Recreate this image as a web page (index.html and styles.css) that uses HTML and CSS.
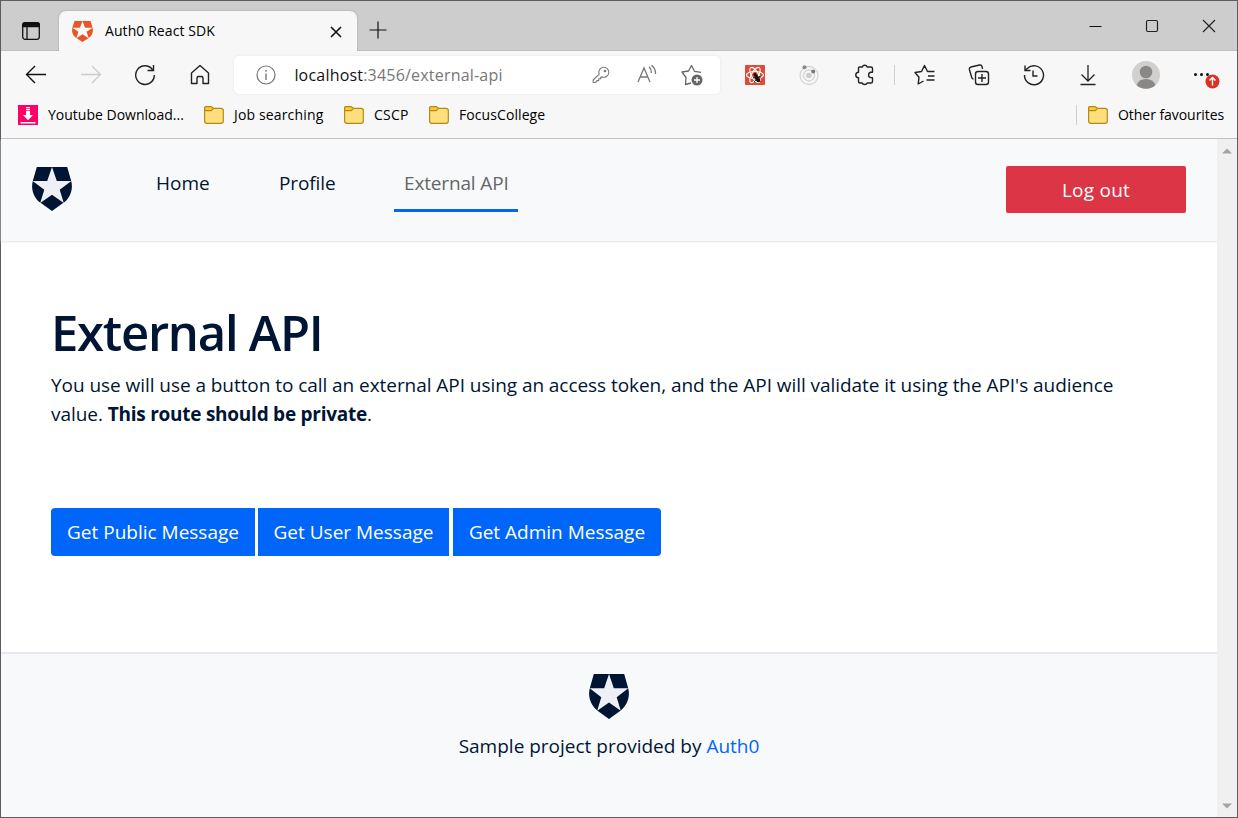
FILE: index.html
```html
<!DOCTYPE html>
<html lang="en">
<head>
<meta charset="utf-8">
<title>Auth0 React SDK</title>
<link rel="stylesheet" href="styles.css">
</head>
<body>
<svg class="defs" width="0" height="0">
  <symbol id="shield" viewBox="0 0 40 45">
    <path class="shield-body" d="M4.8 0H35.2L39 13.5C41.6 22 38.4 31.5 31.8 36.4L20 45 8.2 36.4C1.600 31.500-1.600 22 1 13.500Z"/>
    <path class="shield-star" d="M20 0 24.800 14.300H39.300L27.700 23.300 31.800 36.800 20 28.500 8.200 36.800 12.300 23.300.700 14.300H15.200Z"/>
  </symbol>
  <symbol id="folder" viewBox="0 0 22 20">
    <path d="M1.600 4.500V16q0 2.300 2.300 2.300H18q2.300 0 2.300-2.300V5.500Q20.300 3.300 18 3.300H10" fill="#ffde7c" stroke="#b58a12" stroke-width="1.200"/>
    <path d="M2.800 1.600H8.300L10.400 3.300 8.300 5.600H2.800Q1.600 5.600 1.600 4.500V2.800Q1.600 1.600 2.800 1.600Z" fill="#fcc934" stroke="#b58a12" stroke-width="1.200"/>
  </symbol>
</svg>
<div class="window">
  <div class="tabstrip">
    <svg class="tab-menu" width="20" height="20" viewBox="0 0 20 20" fill="none" stroke="#111" stroke-width="1.300"><rect x="1.700" y="1.700" width="16.600" height="16.600" rx="2.500"/><path d="M1.700 5.500V4q0-2.300 2.300-2.300H16q2.300 0 2.300 2.300V5.500Z" fill="#111"/><path d="M6 6V18"/></svg>
    <div class="tab">
      <svg class="favicon" width="21" height="21" viewBox="0 0 40 45" preserveAspectRatio="none"><use href="#shield" width="40" height="45"/></svg>
      <span class="tab-title">Auth0 React SDK</span>
      <svg class="tab-close" width="12" height="12" viewBox="0 0 12 12" stroke="#111" stroke-width="1.600"><path d="M1 1 11 11M11 1 1 11"/></svg>
    </div>
    <svg class="new-tab" width="18" height="18" viewBox="0 0 18 18" stroke="#111" stroke-width="1.200"><path d="M9 .5V17.500M.5 9H17.500"/></svg>
    <div class="controls">
      <svg width="13" height="14" viewBox="0 0 13 14" stroke="#111"><path d="M.5 7.500H12.500"/></svg>
      <svg width="14" height="14" viewBox="0 0 14 14" fill="none" stroke="#222" stroke-width="1.200"><rect x="1.500" y="1.500" width="11" height="11" rx="1.500"/></svg>
      <svg width="14" height="14" viewBox="0 0 14 14" stroke="#222" stroke-width="1.200"><path d="M1 1 13 13M13 1 1 13"/></svg>
    </div>
  </div>

  <div class="toolbar">
    <div class="nav-icons">
      <svg width="22" height="22" viewBox="0 0 22 22" fill="none" stroke="#111" stroke-width="1.400"><path d="M21 10.500H1.500M10 2 1.500 10.500 10 19"/></svg>
      <svg width="22" height="22" viewBox="0 0 22 22" fill="none" stroke="#ccc" stroke-width="1.300"><path d="M1 10.500H20.500M12 2 20.500 10.500 12 19"/></svg>
      <svg width="22" height="22" viewBox="0 0 22 22" fill="none" stroke="#222" stroke-width="1.400"><path d="M20.300 11A9.300 9.300 0 1 1 18.500 5.600M19.500 1V6.500H13.500"/></svg>
      <svg width="22" height="22" viewBox="0 0 22 22" fill="none" stroke="#222" stroke-width="1.400" stroke-linejoin="round"><path d="M11 1.500 2.500 9V19.500H8V14Q8 12.500 9.500 12.500H12.500Q14 12.500 14 14V19.500H19.500V9Z"/></svg>
    </div>
    <div class="address">
      <svg width="20" height="20" viewBox="0 0 20 20" fill="none" stroke="#777" stroke-width="1.200"><circle cx="10" cy="10" r="9"/><path d="M10 8.500V15M10 5V6.800" stroke-width="1.400"/></svg>
      <span class="url"><b>localhost</b>:3456/external-api</span>
      <svg class="key" width="18" height="18" viewBox="0 0 18 18" fill="none" stroke="#777" stroke-width="1.100" stroke-linejoin="round"><path d="M7.200 8.100A5 5 0 1 1 10.100 10.900L8.700 11.200V12.700H6.700V14.600H5L3.600 16.500H1.200V14Z"/><circle cx="13" cy="5" r=".8" fill="#777"/></svg>
      <svg class="read" width="20" height="20" viewBox="0 0 20 20" fill="none" stroke="#777" stroke-width="1.300"><path d="M1 17 7 3 13 17M3.300 12H10.700M12 1.700Q14.500 4 14.300 8M14.500.2Q19 4 18.400 9"/></svg>
      <svg class="fav" width="22" height="22" viewBox="0 0 22 22" fill="none" stroke="#666" stroke-width="1.300" stroke-linejoin="round"><path d="M10 19 4.500 20.500 5 13.500 1 8 7.500 7 10.500 1.500 13.500 7.300 20 8.300"/><circle cx="16" cy="16" r="5.500" fill="#666" stroke="none"/><path d="M16 13V19M13 16H19" stroke="#fff"/></svg>
    </div>
    <div class="ext-icons">
      <svg width="20" height="20" viewBox="0 0 20 20" fill="none"><rect width="20" height="20" rx="1" fill="#dd4b39"/><g stroke="#fff" stroke-width="1.100"><ellipse cx="10" cy="10" rx="8.500" ry="3.500"/><ellipse cx="10" cy="10" rx="8.500" ry="3.500" transform="rotate(60 10 10)"/><ellipse cx="10" cy="10" rx="8.500" ry="3.500" transform="rotate(120 10 10)"/></g><g fill="#111" stroke="#111" stroke-width=".9"><ellipse cx="12.300" cy="13.500" rx="1.700" ry="3.500" transform="rotate(-30 12.300 13.500)"/><circle cx="10" cy="9.500" r="1.200"/><path d="M8 13 16 12M9 17 15 11M13 17 11 10M15.500 17 12 12"/></g></svg>
      <svg width="22" height="22" viewBox="0 0 22 22" fill="none" stroke="#d5d5d5" stroke-width="1.300"><circle cx="11" cy="11.500" r="9"/><circle cx="11" cy="11.500" r="5.500"/><circle cx="11" cy="11.500" r="2.800" fill="#ccc" stroke="none"/><circle cx="6.500" cy="3.200" r="2" fill="#888" stroke="none"/><circle cx="15.200" cy="7.500" r="2" fill="#777" stroke="none"/></svg>
      <svg width="22" height="22" viewBox="0 0 22 22" fill="none" stroke="#222" stroke-width="1.400" stroke-linejoin="round"><path d="M5.500 3H8.300Q8.800 1.300 10.700 1.300T13.200 3H17Q18.500 3 18.500 4.500V8.300H17Q14.600 8.500 14.600 11T17 13.600H18.500V17.500Q18.500 19 17 19H13.200Q12.800 20.500 10.700 20.500T8.300 19H6Q4.500 19 4.500 17.500V13.800Q1.800 13.500 1.800 11T4.500 8.300V4Q4.500 3 5.500 3Z"/></svg>
    </div>
    <i class="divider"></i>
    <div class="tool-icons">
      <svg width="22" height="22" viewBox="0 0 22 22" fill="none" stroke="#222" stroke-width="1.400" stroke-linejoin="round"><path d="M9.500 17 4.200 20 5 13.300 1 8.500 7.500 7.500 10.500 1.500 13.500 7.500H20.500M14 12H20.500M12.500 16H20.500"/></svg>
      <svg width="22" height="22" viewBox="0 0 22 22" fill="none" stroke="#222" stroke-width="1.400"><rect x="7.500" y="7.500" width="13" height="13" rx="2.500"/><path d="M14 10V18M10 14H18M5.500 15Q4.200 15 3.700 13.500L1.400 5.500Q1 3.500 3 3L11.500 1Q13.500.7 14 2.500L14.500 5"/></svg>
      <svg width="22" height="22" viewBox="0 0 22 22" fill="none" stroke="#222" stroke-width="1.400"><path d="M1.500 11A9.500 9.500 0 1 0 4.500 4.300L2 6.500M2 1.500V6.500H7.500M10 6.500V12H14.500"/></svg>
      <svg width="22" height="22" viewBox="0 0 22 22" fill="none" stroke="#222" stroke-width="1.300"><path d="M11 1V17M4.500 10.500 11 17 17.500 10.500M3.500 20.500H18.500"/></svg>
    </div>
    <svg class="avatar" width="28" height="28" viewBox="0 0 28 28"><circle cx="14" cy="14" r="14" fill="#d2d0ce"/><circle cx="14" cy="11" r="6.300" fill="#8a8886"/><path d="M4.500 24Q7 18 14 18T23.500 24A14 14 0 0 1 4.500 24Z" fill="#8a8886"/></svg>
    <svg class="more" width="28" height="28" viewBox="0 0 28 28"><g fill="#111"><circle cx="3.500" cy="13.500" r="1.500"/><circle cx="9.500" cy="13.500" r="1.500"/><circle cx="15.500" cy="13.500" r="1.500"/></g><circle cx="20.500" cy="20.500" r="7" fill="#dc3122"/><path d="M20.500 24.500V17M17.500 19.500 20.500 16.500 23.500 19.500" fill="none" stroke="#fff" stroke-width="1.400"/></svg>
  </div>

  <div class="bookmarks">
    <svg class="yt" width="20" height="20" viewBox="0 0 20 20"><path fill="#ff0068" d="M0 0H20V20H0Z"/><path fill="#fff" d="M8 2H12V3.200H8ZM8 4H12V5.200H8ZM8 6H12V10H15L10 15.200 5 10H8ZM2.500 17H17.500V18.500H2.500Z"/></svg>
    <span class="bm bm-yt">Youtube Download...</span>
    <svg class="folder" width="22" height="20"><use href="#folder"/></svg>
    <span class="bm bm-job">Job searching</span>
    <svg class="folder" width="22" height="20"><use href="#folder"/></svg>
    <span class="bm bm-cscp">CSCP</span>
    <svg class="folder" width="22" height="20"><use href="#folder"/></svg>
    <span class="bm bm-focus">FocusCollege</span>
    <i class="divider bm-divider"></i>
    <svg class="folder" width="22" height="20"><use href="#folder"/></svg>
    <span class="bm bm-other">Other favourites</span>
  </div>

  <div class="viewport">
    <div class="page">
      <header class="navbar">
        <svg class="brand" width="40" height="44" viewBox="0 0 40 45" preserveAspectRatio="none"><use href="#shield" width="40" height="45"/></svg>
        <nav class="links">
          <a class="link home">Home</a>
          <a class="link profile">Profile</a>
          <a class="link active">External API</a>
        </nav>
        <button class="logout">Log out</button>
      </header>
      <main class="content">
        <h1>External API</h1>
        <p class="lead"><span class="line1">You use will use a button to call an external API using an access token, and the API will validate it using the API's audience</span> <span class="line2">value. <strong>This route should be private</strong>.</span></p>
        <div class="btn-group">
          <button class="btn public">Get Public Message</button>
          <button class="btn user">Get User Message</button>
          <button class="btn admin">Get Admin Message</button>
        </div>
      </main>
      <footer class="footer">
        <svg class="brand" width="40" height="45"><use href="#shield"/></svg>
        <p class="credit">Sample project provided by <a>Auth0</a></p>
      </footer>
    </div>
    <div class="scrollbar">
      <svg width="10" height="6" viewBox="0 0 10 6"><path d="M0 5.500 5 .5 10 5.500Z" fill="#a3a3a3"/></svg>
      <svg width="10" height="6" viewBox="0 0 10 6"><path d="M0 .5 5 5.500 10 .5Z" fill="#a3a3a3"/></svg>
    </div>
  </div>
</div>
</body>
</html>
```
FILE: styles.css
```css
* { box-sizing: border-box; }
body { margin: 0; font-family: "Open Sans", "Noto Sans", sans-serif; color: #000; overflow: hidden; }
svg { display: block; flex: none; }
span, a { white-space: nowrap; }
.defs { display: none; }
.shield-body { fill: var(--shield, #001533); }
.shield-star { fill: var(--star, #eff0f5); }

.window { width: 1238px; height: 818px; border: 1px solid #5e5c60; display: flex; flex-direction: column; background: #f7f7f7; }

.tabstrip { height: 50px; background: #cdcdcd; display: flex; border-bottom: 1px solid #bebebe; }
.tab-menu { margin: 20px 18px 0 20px; }
.tab { width: 298px; height: 40px; margin-top: 10px; background: #f7f7f7; border-radius: 7px 7px 0 0; box-shadow: 0 0 2px #999; clip-path: inset(-3px -3px 0); display: flex; align-items: center; padding-left: 13px; }
.favicon { --shield: #eb5424; --star: #fff; }
.tab-title { font-size: 14px; letter-spacing: .08px; margin: 0 0 2px 12px; flex: 1; }
.tab-close { margin: 1px 15px 0 0; }
.new-tab { margin: 20px 0 0 12px; }
.controls { display: flex; gap: 43px; margin: 18px 21px 0 auto; }

.toolbar { height: 47px; display: flex; align-items: center; padding-left: 8px; }
.nav-icons, .ext-icons, .tool-icons { display: flex; }
.nav-icons svg { margin: 0 16.300px; }
.ext-icons { align-items: center; margin-left: 8px; width: 164px; justify-content: space-around; }
.tool-icons { width: 218px; margin-left: 2px; justify-content: space-around; }
.address { width: 486px; height: 38px; margin-left: 7px; background: #fff; border-radius: 5px; box-shadow: 0 0 3px #e4e4e4; display: flex; align-items: center; padding-left: 22px; }
.url { font-size: 16px; letter-spacing: .2px; color: #777; width: 298px; margin-left: 18px; }
.url b { font-weight: 400; color: #111; }
.key { margin-right: 27px; }
.read { margin-right: 24px; }
.divider { width: 1px; height: 20px; background: #cfcfcf; margin-left: 2px; flex: none; }
.avatar { margin-left: 17px; }
.more { margin-left: 32px; }

.bookmarks { height: 41px; display: flex; align-items: center; border-bottom: 1px solid #bfbfbf; padding: 0 13px 6px 17px; font-size: 14px; }
.bm { margin-left: 9px; margin-bottom: 2px; }
.bm-yt { width: 138px; margin-left: 10px; margin-right: 17px; }
.bm-job { width: 93px; margin-right: 16px; letter-spacing: .15px; }
.bm-cscp { width: 38px; margin-right: 16px; letter-spacing: .2px; }
.bm-focus { letter-spacing: .08px; }
.bm-divider { margin-left: auto; margin-right: 10px; }
.bm-other { width: 106px; letter-spacing: -.05px; }

.viewport { flex: 1; display: flex; min-height: 0; }
.page { flex: 1; display: flex; flex-direction: column; background: #fff; color: #001533; font-size: 19px; font-weight: 400; }
.scrollbar { width: 20px; background: #f0f0f0; display: flex; flex-direction: column; justify-content: space-between; align-items: center; padding: 9px 0 8px; }

.navbar { height: 102px; background: #f8f9fb; display: flex; padding: 27px 31px; box-shadow: 0 1px 2px #dde3ea; }
.navbar .brand { margin-top: 1px; }
.links { display: flex; margin-left: 74px; height: 46px; gap: 50px; }
.link { padding: 4px 10px 0; line-height: 26px; }
.home { width: 73px; }
.profile { width: 75px; letter-spacing: -.1px; }
.active { width: 124px; letter-spacing: -.15px; color: #666; border-bottom: 3px solid #0066f9; }
.logout { width: 180px; height: 47px; margin-left: auto; border: 0; border-radius: 2px; background: #dc3545; color: #fff; font: 400 19px "Open Sans", sans-serif; letter-spacing: .25px; }

.content { height: 411px; padding: 60px 50px 0; }
h1 { margin: 0; font-size: 49px; line-height: 62px; font-weight: 600; letter-spacing: -1.25px; }
.lead { margin: 8px 0 0; line-height: 29px; display: flex; flex-direction: column; letter-spacing: -.055px; }
.lead strong { font-weight: 700; letter-spacing: -.25px; }
.btn-group { margin-top: 79px; display: flex; width: 610px; }
.btn { height: 48px; padding: 0; border: 0; background: #0066f9; color: #fff; font: 400 19px "Open Sans", sans-serif; white-space: nowrap; }
.public { width: 204px; border-radius: 4px 0 0 4px; margin-right: 3px; }
.user { width: 191px; margin-right: 4px; }
.admin { width: 208px; border-radius: 0 4px 4px 0; }

.footer { flex: 1; background: #f8f9fb; border-top: 2px solid #e6e9ee; display: flex; flex-direction: column; align-items: center; padding-top: 20px; }
.credit { margin: 13px 0 0; line-height: 29px; }
.credit a { color: #0066f9; }
```
